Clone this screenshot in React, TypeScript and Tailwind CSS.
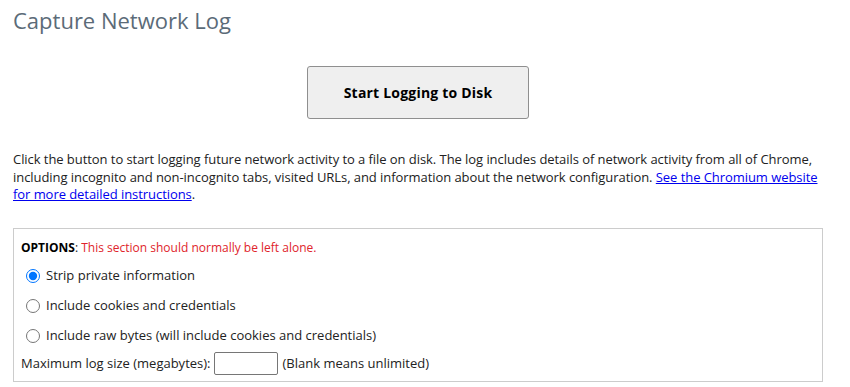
import React from "react";

export default function App() {
  return (
    <div
      className="w-[850px] h-[387px] bg-white overflow-hidden pl-[13px] pr-[27px] text-[13px] text-[#222]"
      style={{ fontFamily: '"Open Sans", "Noto Sans", sans-serif' }}
    >
      <h1 className="pt-[6px] text-[22px] leading-[28px] text-[#5b6b78] font-normal">
        Capture Network Log
      </h1>
      <div className="flex justify-center mt-[32px]">
        <button className="w-[222px] h-[53px] bg-[#efefef] border border-[#8f8f8f] rounded-[3px] text-[14px] font-bold text-black tracking-[0.2px]">
          Start Logging to Disk
        </button>
      </div>
      <p className="mt-[32px] leading-[17.5px] tracking-[-0.06px] mr-[-20px]">
        Click the button to start logging future network activity to a file on disk. The log includes details of network activity from all of Chrome,
        <br />
        including incognito and non-incognito tabs, visited URLs, and information about the network configuration.{" "}
        <a href="#" className="text-[#0000ee] underline">
          See the Chromium website
          <br />
          for more detailed instructions
        </a>
        .
      </p>
      <div className="mt-[24px] border border-[#cccccc] h-[154px] px-[7px] pt-[11px]">
        <div className="text-[12px] leading-[16px]">
          <span className="font-bold text-black">OPTIONS</span>:{" "}
          <span className="text-[#e0242b]">This section should normally be left alone.</span>
        </div>
        <div className="flex flex-col mt-[10px] gap-[10px]">
          <label className="flex items-center h-[20px]">
            <input type="radio" name="opt" defaultChecked className="w-[14px] h-[14px] ml-[5px] mr-[6px]" />
            Strip private information
          </label>
          <label className="flex items-center h-[20px]">
            <input type="radio" name="opt" className="w-[14px] h-[14px] ml-[5px] mr-[6px]" />
            Include cookies and credentials
          </label>
          <label className="flex items-center h-[20px]">
            <input type="radio" name="opt" className="w-[14px] h-[14px] ml-[5px] mr-[6px]" />
            Include raw bytes (will include cookies and credentials)
          </label>
        </div>
        <div className="flex items-center mt-[6px] h-[24px]">
          <span>Maximum log size (megabytes):</span>
          <input type="text" className="ml-[3px] w-[64px] h-[23px] border border-[#767676] rounded-[2px]" />
          <span className="ml-[5px]">(Blank means unlimited)</span>
        </div>
      </div>
    </div>
  );
}
